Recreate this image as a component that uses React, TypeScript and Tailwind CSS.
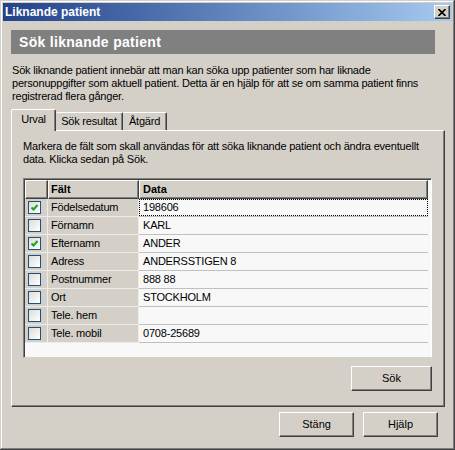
import React from 'react'

// "Liknande patient" dialog — classic Windows 2000 look.

type Row = { field: string; data: string; checked: boolean }

const ROWS: Row[] = [
  { field: 'Födelsedatum', data: '198606', checked: true },
  { field: 'Förnamn', data: 'KARL', checked: false },
  { field: 'Efternamn', data: 'ANDER', checked: true },
  { field: 'Adress', data: 'ANDERSSTIGEN 8', checked: false },
  { field: 'Postnummer', data: '888 88', checked: false },
  { field: 'Ort', data: 'STOCKHOLM', checked: false },
  { field: 'Tele. hem', data: '', checked: false },
  { field: 'Tele. mobil', data: '0708-25689', checked: false },
]

const RAISED =
  'border border-t-white border-l-white border-r-[#404040] border-b-[#404040] shadow-[inset_-1px_-1px_#808080]'

function Button({ label, className }: { label: string; className?: string }) {
  return (
    <div
      className={`h-[25px] w-[75px] flex items-center justify-center bg-[#d4d0c8] text-black ${RAISED} ${className ?? ''}`}
    >
      {label}
    </div>
  )
}

function Check({ checked }: { checked: boolean }) {
  return (
    <div className="w-[13px] h-[13px] border border-[#1c5180] bg-linear-to-br from-[#dcdcd7] to-white flex items-center justify-center">
      {checked && (
        <svg width="11" height="11" viewBox="0 0 11 11">
          <path d="M2.5 5.5 L4.5 7.5 L8.5 3" fill="none" stroke="#21a121" strokeWidth="2" />
        </svg>
      )}
    </div>
  )
}

export default function App() {
  return (
    <div className="w-[455px] h-[450px] bg-[#d4d0c8] p-[3px] flex flex-col text-[11px] text-black font-['Liberation_Sans',Arial,sans-serif] shadow-[inset_-1px_-1px_#404040,inset_1px_1px_#d4d0c8,inset_-2px_-2px_#808080,inset_2px_2px_#fff]">
      {/* Title bar */}
      <div className="h-[18px] flex items-center justify-between bg-linear-to-r from-[#24418a] to-[#a6caf0] pl-[2px] pr-[2px]">
        <span className="text-white font-bold text-[12px]">Liknande patient</span>
        <div className={`w-[16px] h-[14px] bg-[#d4d0c8] flex items-center justify-center ${RAISED}`}>
          <svg width="8" height="7" viewBox="0 0 8 7">
            <path d="M0.5 0 L7.5 7 M7.5 0 L0.5 7" stroke="black" strokeWidth="1.6" />
          </svg>
        </div>
      </div>

      {/* Header band */}
      <div className="mt-[9px] ml-[8px] w-[424px] h-[24px] bg-[#808080] flex items-center pl-[8px] text-white font-bold text-[14px] tracking-[0.3px]">
        Sök liknande patient
      </div>

      <p className="mt-[10px] ml-[9px] leading-[13px] whitespace-nowrap tracking-[-0.2px]">
        Sök liknande patient innebär att man kan söka upp patienter som har liknade
        <br />
        personuppgifter som aktuell patient. Detta är en hjälp för att se om samma patient finns
        <br />
        registrerad flera gånger.
      </p>

      {/* Tabs */}
      <div className="mt-[6px] ml-[8px] h-[21px] flex items-end relative z-10 tracking-[-0.2px]">
        <div className="w-[45px] h-[22px] -mb-px bg-[#d4d0c8] border-t border-l border-t-white border-l-white border-r border-r-[#404040] shadow-[inset_-1px_0_#808080] rounded-t-[2px] flex items-center justify-center pb-[2px]">
          Urval
        </div>
        <div className="w-[67px] h-[18px] border-t border-t-white border-r border-r-[#404040] shadow-[inset_-1px_0_#808080] rounded-t-[2px] flex items-center justify-center">
          Sök resultat
        </div>
        <div className="w-[44px] h-[18px] border-t border-t-white border-r border-r-[#404040] shadow-[inset_-1px_0_#808080] rounded-t-[2px] flex items-center justify-center">
          Åtgärd
        </div>
      </div>

      {/* Tab panel */}
      <div className={`ml-[8px] w-[434px] h-[277px] pt-[9px] pl-[11px] ${RAISED}`}>
        <p className="leading-[13px] whitespace-nowrap tracking-[-0.2px]">
          Markera de fält som skall användas för att söka liknande patient och ändra eventuellt
          <br />
          data. Klicka sedan på Sök.
        </p>

        {/* Grid */}
        <div className="mt-[12px] w-[409px] h-[180px] border border-t-[#808080] border-l-[#808080] border-r-white border-b-[#d4d0c8] shadow-[inset_1px_1px_#404040] bg-[#f8f8f8] pt-px pl-px">
          <div className="flex h-[19px] font-bold">
            <div className={`w-[23px] h-[19px] bg-[#d4d0c8] ${RAISED}`} />
            <div className={`w-[91px] h-[19px] bg-[#d4d0c8] pl-[2px] flex items-center ${RAISED}`}>Fält</div>
            <div className={`w-[289px] h-[19px] bg-[#d4d0c8] pl-[3px] flex items-center ${RAISED}`}>Data</div>
          </div>
          {ROWS.map((r, i) => (
            <div key={r.field} className="flex h-[18px] tracking-[-0.2px]">
              <div className="w-[23px] bg-[#d4d0c8] border-r border-b border-[#ececec] flex items-center pl-[3px]">
                <Check checked={r.checked} />
              </div>
              <div className="w-[91px] bg-[#d4d0c8] border-r border-b border-[#ececec] pl-[3px] flex items-center">
                {r.field}
              </div>
              <div className="w-[289px] border-b border-[#c0c0c0] flex items-center">
                {i === 0 ? (
                  <div className="w-full h-full border border-dotted border-black pl-[3px] flex items-center">
                    {r.data}
                  </div>
                ) : (
                  <span className="pl-[4px]">{r.data}</span>
                )}
              </div>
            </div>
          ))}
        </div>

        <div className="w-[409px] flex justify-end mt-[8px]">
          <Button label="Sök" className="w-[81px]" />
        </div>
      </div>

      {/* Dialog buttons */}
      <div className="mt-[5px] flex justify-end gap-[9px] pr-[14px]">
        <Button label="Stäng" />
        <Button label="Hjälp" />
      </div>
    </div>
  )
}
